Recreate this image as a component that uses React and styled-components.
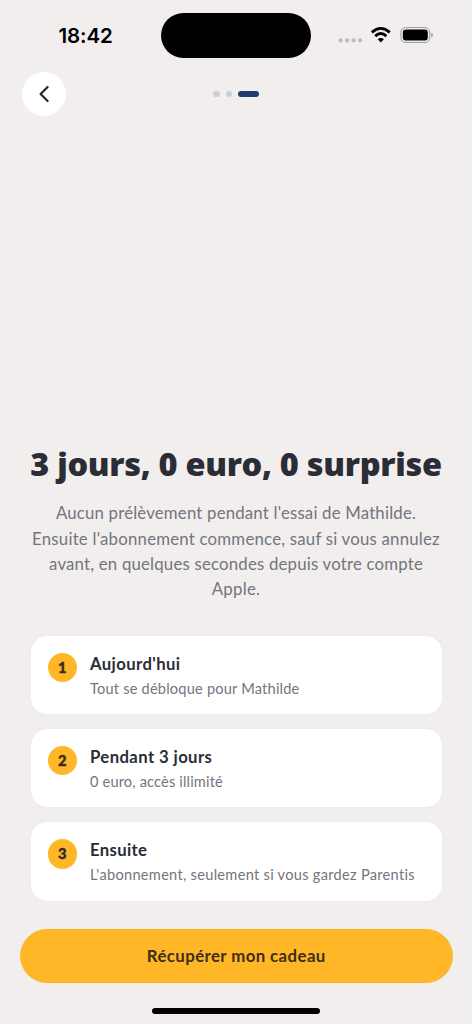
import React from "react";
import styled, { createGlobalStyle } from "styled-components";

const GlobalStyle = createGlobalStyle`
  *, *::before, *::after { box-sizing: border-box; }
  html, body { margin: 0; background: #f1eeed; }
  button { font: inherit; border: 0; padding: 0; }
`;

const Screen = styled.main`
  width: 472px;
  height: 1024px;
  display: flex;
  flex-direction: column;
  overflow: hidden;
  background: #f1eeed;
  color: #2a2d35;
  font-family: Lato, "Open Sans", sans-serif;
`;

const StatusBar = styled.header`
  height: 72px;
  flex: none;
  display: grid;
  grid-template-columns: 161px 150px 161px;
  padding-top: 13px;
`;

const Clock = styled.time`
  height: 44px;
  padding-left: 58.5px;
  color: #000;
  font: 600 20.5px/45px Inter, sans-serif;
  letter-spacing: -0.1px;
`;

const Island = styled.div`
  height: 45px;
  border-radius: 23px;
  background: #000;
`;

const StatusIcons = styled.div`
  height: 44px;
  padding-left: 17px;
  svg { display: block; }
`;

const NavBar = styled.nav`
  height: 44px;
  flex: none;
  display: grid;
  grid-template-columns: 44px 1fr 44px;
  align-items: center;
  padding: 0 22px;
`;

const BackButton = styled.button`
  width: 44px;
  height: 44px;
  display: grid;
  place-items: center;
  border-radius: 50%;
  background: #fff;
`;

const Steps = styled.div`
  display: flex;
  justify-content: center;
  gap: 6px;
`;

const Step = styled.span`
  width: ${(p) => (p.$active ? 21 : 6.5)}px;
  height: 6.5px;
  border-radius: 4px;
  background: ${(p) => (p.$active ? "#203d6b" : "#cdd0d5")};
`;

const Content = styled.section`
  flex: 1;
  display: flex;
  flex-direction: column;
  justify-content: flex-end;
  padding: 0 30.5px;
`;

const Title = styled.h1`
  margin: 0 -20px 15px;
  text-align: center;
  white-space: nowrap;
  font-family: "Open Sans", sans-serif;
  font-size: 32.5px;
  line-height: 42px;
  font-weight: 800;
  letter-spacing: -0.31px;
`;

const Description = styled.p`
  margin: 0 -20px 34.5px;
  text-align: center;
  color: #73757d;
  font-size: 16.8px;
  line-height: 25.2px;
`;

const Line = styled.span`
  display: block;
  white-space: nowrap;
  letter-spacing: ${(p) => p.$track}px;
`;

const Timeline = styled.ol`
  display: flex;
  flex-direction: column;
  gap: 14.7px;
  margin: 0;
  padding: 0;
  list-style: none;
`;

const Card = styled.li`
  height: 78.5px;
  display: flex;
  gap: 13px;
  padding: 17px;
  border-radius: 16px;
  background: #fff;
  box-shadow: 0 0 2px rgba(90, 90, 140, 0.07);
`;

const Badge = styled.span`
  width: 29.5px;
  height: 29.5px;
  flex: none;
  border-radius: 50%;
  background: #ffb727;
  color: #352c20;
  text-align: center;
  font-size: 14.7px;
  line-height: 29px;
  font-weight: 900;
  -webkit-text-stroke: 0.4px #352c20;
`;

const CardBody = styled.div`
  white-space: nowrap;
`;

const CardTitle = styled.h2`
  margin: 0;
  font-size: 16.7px;
  line-height: 22px;
  font-weight: 700;
  letter-spacing: ${(p) => p.$track}px;
`;

const CardText = styled.p`
  margin: 4px 0 0;
  color: #73757d;
  font-size: 14.6px;
  line-height: 20px;
  letter-spacing: ${(p) => p.$track}px;
`;

const Footer = styled.footer`
  flex: none;
  display: flex;
  flex-direction: column;
  align-items: center;
  padding: 28px 19.5px 10px 20px;
`;

const CallToAction = styled.button`
  width: 100%;
  height: 54.5px;
  margin-bottom: 25px;
  border-radius: 28px;
  background: #ffb728;
  color: #3b2d18;
  font-size: 16.8px;
  font-weight: 700;
  letter-spacing: 0.42px;
`;

const HomeIndicator = styled.div`
  width: 168px;
  height: 6px;
  border-radius: 3px;
  background: #000;
`;

const lines = [
  { text: "Aucun prélèvement pendant l'essai de Mathilde.", track: 0.19 },
  { text: "Ensuite l'abonnement commence, sauf si vous annulez", track: 0.22 },
  { text: "avant, en quelques secondes depuis votre compte", track: 0.2 },
  { text: "Apple.", track: 0.3 },
];

const stages = [
  { title: "Aujourd'hui", text: "Tout se débloque pour Mathilde", titleTrack: 0.4, textTrack: 0.2 },
  { title: "Pendant 3 jours", text: "0 euro, accès illimité", titleTrack: 0.4, textTrack: 0.16 },
  { title: "Ensuite", text: "L'abonnement, seulement si vous gardez Parentis", titleTrack: 0.35, textTrack: 0.29 },
];

function DeviceStatus() {
  return (
    <svg width="110" height="44" viewBox="0 0 110 44">
      <g fill="#bdbbbb">
        <circle cx="12.6" cy="27.4" r="2.1" />
        <circle cx="19.1" cy="27.4" r="2.1" />
        <circle cx="25.6" cy="27.4" r="2.1" />
        <circle cx="32.1" cy="27.4" r="2.1" />
      </g>
      <g fill="none" stroke="#000" strokeWidth="2.8">
        <path d="M43.8 19.4Q52.8 11.4 61.8 19.4" />
        <path d="M47.2 23.1Q52.8 18 58.4 23.1" />
      </g>
      <path d="M49.7 26.3Q52.8 23.8 55.9 26.3L52.8 29.4Z" />
      <rect x="72.9" y="14.6" width="28.8" height="14.8" rx="4.6" fill="none" stroke="#999" />
      <rect x="74.8" y="16.5" width="25" height="11" rx="3" />
      <path d="M103.2 19.8Q105 20.6 105 22T103.2 24.2Z" fill="#999" />
    </svg>
  );
}

export default function App() {
  return (
    <Screen>
      <GlobalStyle />
      <StatusBar>
        <Clock>18:42</Clock>
        <Island />
        <StatusIcons>
          <DeviceStatus />
        </StatusIcons>
      </StatusBar>
      <NavBar>
        <BackButton aria-label="Retour">
          <svg width="20" height="20" viewBox="0 0 20 20" fill="none" stroke="#25272d" strokeWidth="2.2" strokeLinecap="round" strokeLinejoin="round">
            <path d="M13.6 3L6.6 10L13.6 17" />
          </svg>
        </BackButton>
        <Steps>
          <Step />
          <Step />
          <Step $active />
        </Steps>
      </NavBar>
      <Content>
        <Title>3 jours, 0 euro, 0 surprise</Title>
        <Description>
          {lines.map((l) => (
            <Line key={l.text} $track={l.track}>{l.text}</Line>
          ))}
        </Description>
        <Timeline>
          {stages.map((s, i) => (
            <Card key={s.title}>
              <Badge>{i + 1}</Badge>
              <CardBody>
                <CardTitle $track={s.titleTrack}>{s.title}</CardTitle>
                <CardText $track={s.textTrack}>{s.text}</CardText>
              </CardBody>
            </Card>
          ))}
        </Timeline>
      </Content>
      <Footer>
        <CallToAction>Récupérer mon cadeau</CallToAction>
        <HomeIndicator />
      </Footer>
    </Screen>
  );
}
